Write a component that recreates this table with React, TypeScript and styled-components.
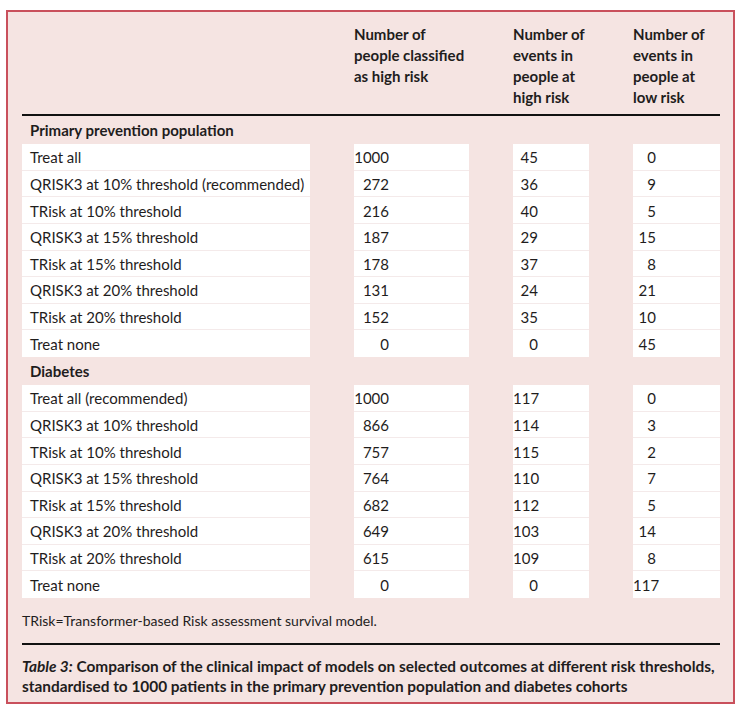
import React from "react";
import styled, { createGlobalStyle } from "styled-components";

const GlobalStyle = createGlobalStyle`
  body {
    margin: 0;
    background: #ffffff;
    font-family: Lato, "Liberation Sans", sans-serif;
    color: #1f1d1d;
  }
`;

const Page = styled.div`
  padding: 10px 8px 0 6px;
`;

const Frame = styled.div`
  width: 729px;
  height: 694px;
  box-sizing: border-box;
  border: 2px solid #c9505c;
  background: #f5e4e2;
  padding: 12px 13px 0 14px;
`;

const Table = styled.div`
  display: grid;
  grid-template-columns: 288px 115px 76px 87px;
  column-gap: 44px;
`;

const HeadCell = styled.div`
  font-weight: 700;
  font-size: 15px;
  line-height: 21px;
  padding-bottom: 6px;
  white-space: nowrap;
`;

const HeaderRule = styled.div`
  grid-column: 1 / -1;
  height: 2px;
  background: #111;
`;

const SectionTitle = styled.div`
  grid-column: 1 / -1;
  height: 28px;
  display: flex;
  align-items: center;
  padding-left: 8px;
  font-weight: 700;
  font-size: 15px;
`;

const Cell = styled.div<{ $last?: boolean }>`
  height: 26.625px;
  box-sizing: border-box;
  background: #ffffff;
  border-bottom: 1px solid ${(p) => (p.$last ? "#ffffff" : "#f4eaea")};
  display: flex;
  align-items: center;
  padding-top: 1px;
  font-size: 15px;
  white-space: nowrap;
`;

const LabelCell = styled(Cell)`
  padding-left: 8px;
`;

const Num = styled.span<{ $w: number }>`
  display: inline-block;
  width: ${(p) => p.$w}px;
  text-align: right;
`;

const Footnote = styled.div`
  margin-top: 15px;
  font-size: 14px;
  line-height: 16px;
`;

const FootRule = styled.div`
  margin-top: 14px;
  height: 2px;
  background: #111;
`;

const Caption = styled.div`
  margin-top: 11px;
  font-weight: 700;
  font-size: 15.4px;
  line-height: 20px;
  white-space: nowrap;

  em {
    font-style: italic;
  }
`;

type Row = [string, number, number, number];

const primary: Row[] = [
  ["Treat all", 1000, 45, 0],
  ["QRISK3 at 10% threshold (recommended)", 272, 36, 9],
  ["TRisk at 10% threshold", 216, 40, 5],
  ["QRISK3 at 15% threshold", 187, 29, 15],
  ["TRisk at 15% threshold", 178, 37, 8],
  ["QRISK3 at 20% threshold", 131, 24, 21],
  ["TRisk at 20% threshold", 152, 35, 10],
  ["Treat none", 0, 0, 45],
];

const diabetes: Row[] = [
  ["Treat all (recommended)", 1000, 117, 0],
  ["QRISK3 at 10% threshold", 866, 114, 3],
  ["TRisk at 10% threshold", 757, 115, 2],
  ["QRISK3 at 15% threshold", 764, 110, 7],
  ["TRisk at 15% threshold", 682, 112, 5],
  ["QRISK3 at 20% threshold", 649, 103, 14],
  ["TRisk at 20% threshold", 615, 109, 8],
  ["Treat none", 0, 0, 117],
];

const widths = [35, 25, 23];

const Section: React.FC<{ title: string; rows: Row[] }> = ({ title, rows }) => (
  <>
    <SectionTitle>{title}</SectionTitle>
    {rows.map((r, i) => {
      const last = i === rows.length - 1;
      return (
        <React.Fragment key={r[0]}>
          <LabelCell $last={last}>{r[0]}</LabelCell>
          {[r[1], r[2], r[3]].map((n, j) => (
            <Cell key={j} $last={last}>
              <Num $w={widths[j]}>{n}</Num>
            </Cell>
          ))}
        </React.Fragment>
      );
    })}
  </>
);

const App: React.FC = () => (
  <Page>
    <GlobalStyle />
    <Frame>
      <Table>
        <HeadCell />
        <HeadCell>
          Number of
          <br />
          people classified
          <br />
          as high risk
        </HeadCell>
        <HeadCell>
          Number of
          <br />
          events in
          <br />
          people at
          <br />
          high risk
        </HeadCell>
        <HeadCell>
          Number of
          <br />
          events in
          <br />
          people at
          <br />
          low risk
        </HeadCell>
        <HeaderRule />
        <Section title="Primary prevention population" rows={primary} />
        <Section title="Diabetes" rows={diabetes} />
      </Table>
      <Footnote>TRisk=Transformer-based Risk assessment survival model.</Footnote>
      <FootRule />
      <Caption>
        <em>Table 3:</em> Comparison of the clinical impact of models on selected outcomes at
        different risk thresholds,
        <br />
        standardised to 1000 patients in the primary prevention population and diabetes cohorts
      </Caption>
    </Frame>
  </Page>
);

export default App;
